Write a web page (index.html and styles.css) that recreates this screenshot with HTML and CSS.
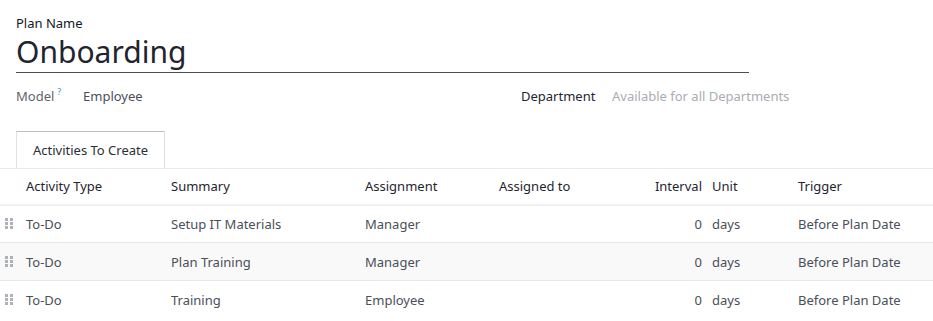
FILE: index.html
```html
<!DOCTYPE html>
<html lang="en">
<head>
    <meta charset="UTF-8">
    <title>Onboarding</title>
    <link rel="stylesheet" href="styles.css">
</head>
<body>
    <div class="sheet">
        <div class="title">
            <label class="title-label">Plan Name</label>
            <div class="title-input">Onboarding</div>
        </div>
        <div class="fields">
            <div class="field field-model">
                <span class="field-label">Model<sup class="help">?</sup></span>
                <span class="field-value">Employee</span>
            </div>
            <div class="field field-dept">
                <span class="field-label strong">Department</span>
                <span class="field-value placeholder">Available for all Departments</span>
            </div>
        </div>
        <div class="tabs">
            <div class="tab active">Activities To Create</div>
        </div>
    </div>

    <table class="list">
        <colgroup>
            <col style="width:22px">
            <col style="width:145px">
            <col style="width:194px">
            <col style="width:134px">
            <col style="width:154px">
            <col style="width:59px">
            <col style="width:86px">
            <col>
        </colgroup>
        <thead>
            <tr>
                <th></th>
                <th>Activity Type</th>
                <th>Summary</th>
                <th>Assignment</th>
                <th>Assigned to</th>
                <th class="num">Interval</th>
                <th>Unit</th>
                <th>Trigger</th>
            </tr>
        </thead>
        <tbody>
            <tr>
                <td class="handle"><svg width="8" height="11" viewBox="0 0 8 11"><g fill="#aeb1b8"><rect x="0" y="0" width="3" height="3"/><rect x="5" y="0" width="3" height="3"/><rect x="0" y="4" width="3" height="3"/><rect x="5" y="4" width="3" height="3"/><rect x="0" y="8" width="3" height="3"/><rect x="5" y="8" width="3" height="3"/></g></svg></td>
                <td>To-Do</td>
                <td>Setup IT Materials</td>
                <td>Manager</td>
                <td></td>
                <td class="num">0</td>
                <td>days</td>
                <td>Before Plan Date</td>
            </tr>
            <tr>
                <td class="handle"><svg width="8" height="11" viewBox="0 0 8 11"><g fill="#aeb1b8"><rect x="0" y="0" width="3" height="3"/><rect x="5" y="0" width="3" height="3"/><rect x="0" y="4" width="3" height="3"/><rect x="5" y="4" width="3" height="3"/><rect x="0" y="8" width="3" height="3"/><rect x="5" y="8" width="3" height="3"/></g></svg></td>
                <td>To-Do</td>
                <td>Plan Training</td>
                <td>Manager</td>
                <td></td>
                <td class="num">0</td>
                <td>days</td>
                <td>Before Plan Date</td>
            </tr>
            <tr>
                <td class="handle"><svg width="8" height="11" viewBox="0 0 8 11"><g fill="#aeb1b8"><rect x="0" y="0" width="3" height="3"/><rect x="5" y="0" width="3" height="3"/><rect x="0" y="4" width="3" height="3"/><rect x="5" y="4" width="3" height="3"/><rect x="0" y="8" width="3" height="3"/><rect x="5" y="8" width="3" height="3"/></g></svg></td>
                <td>To-Do</td>
                <td>Training</td>
                <td>Employee</td>
                <td></td>
                <td class="num">0</td>
                <td>days</td>
                <td>Before Plan Date</td>
            </tr>
        </tbody>
    </table>
</body>
</html>
```

FILE: styles.css
```css
*{
    box-sizing: border-box;
}
body{
    margin: 0;
    background: #fff;
    font-family: "Noto Sans", "Open Sans", sans-serif;
    font-size: 13px;
    color: #4a4f59;
}
.sheet{
    padding: 14px 16px 0 16px;
}
.title{
    width: 733px;
}
.title-label{
    display: block;
    color: #111827;
    line-height: 18px;
}
.title-input{
    font-size: 30px;
    line-height: 40px;
    color: #1f2430;
    border-bottom: 1px solid #4b4f57;
}
.fields{
    display: flex;
    margin-top: 12px;
    line-height: 22px;
}
.field{
    display: flex;
}
.field-model{
    width: 505px;
}
.field-model .field-label{
    width: 67px;
    color: #5f646d;
}
.field-dept .field-label{
    width: 91px;
}
.field-label.strong{
    color: #1f2430;
}
.help{
    color: #3e9ecb;
    font-size: 9px;
    margin-left: 3px;
    line-height: 0;
    vertical-align: 6px;
}
.placeholder{
    color: #a9adb3;
}
.tabs{
    display: flex;
    margin-top: 24px;
}
.tab{
    height: 37px;
    padding: 0 16px;
    line-height: 37px;
    color: #2b2f36;
    border: 1px solid #dee2e6;
    border-top-color: #c5bcc3;
    border-bottom: none;
    width: 149px;
    white-space: nowrap;
}
.list{
    width: 933px;
    border-collapse: collapse;
    table-layout: fixed;
    border-top: 1px solid #e9ebee;
}
.list th,.list td{
    padding: 0 4px;
    text-align: left;
    white-space: nowrap;
}
.list th{
    height: 36px;
    font-weight: 400;
    color: #1f2430;
    border-bottom: 2px solid #eff0f2;
}
.list td{
    height: 38px;
    border-bottom: 1px solid #e5e7ea;
}
.list tbody tr:nth-child(even){
    background: #f9f9f9;
}
.list tbody tr:last-child td{
    border-bottom: none;
}
.list .num{
    text-align: right;
    padding-right: 6px;
}
.list .handle{
    padding: 0 0 0 5px;
    line-height: 0;
}
```
